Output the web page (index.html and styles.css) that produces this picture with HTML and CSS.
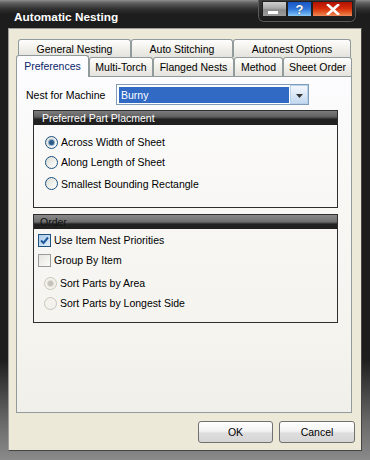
FILE: index.html
```html
<!DOCTYPE html>
<html>
<head>
<meta charset="utf-8">
<link rel="stylesheet" href="styles.css">
</head>
<body>
<div class="window">
  <div class="titlebar">
    <span class="title">Automatic Nesting</span>
    <div class="caption">
      <span class="cb cb-min"><span class="dash"></span></span>
      <span class="cb cb-help">?</span>
      <span class="cb cb-close"><svg width="14" height="11" viewBox="0 0 14 11"><path d="M2 1 L12 10 M12 1 L2 10" stroke="#fff" stroke-width="2.6" stroke-linecap="square"/></svg></span>
    </div>
  </div>
  <div class="client">
    <div class="tabs">
      <div class="tabrow back">
        <div class="tab w-gen">General Nesting</div>
        <div class="tab w-auto">Auto Stitching</div>
        <div class="tab w-opt">Autonest Options</div>
      </div>
      <div class="tabrow front">
        <div class="tab sel w-pref">Preferences</div>
        <div class="tab w-multi">Multi-Torch</div>
        <div class="tab w-flange">Flanged Nests</div>
        <div class="tab w-method">Method</div>
        <div class="tab w-sheet">Sheet Order</div>
      </div>
      <div class="panel">
        <div class="machine-row">
          <span class="label">Nest for Machine</span>
          <div class="combo">
            <span class="combo-sel">Burny</span>
            <span class="combo-btn"><svg width="7" height="4" viewBox="0 0 7 4"><path d="M0 0 H7 L3.5 4 Z" fill="#333"/></svg></span>
          </div>
        </div>
        <div class="group g-place">
          <div class="ghead light">Preferred Part Placment</div>
          <div class="gbody">
            <div class="opt r1"><span class="radio on"></span><span>Across Width of Sheet</span></div>
            <div class="opt r1"><span class="radio"></span><span>Along Length of Sheet</span></div>
            <div class="opt r1 r-last"><span class="radio"></span><span>Smallest Bounding Rectangle</span></div>
          </div>
        </div>
        <div class="group g-order">
          <div class="ghead dark">Order</div>
          <div class="gbody">
            <div class="opt c1"><span class="check on"><svg width="11" height="11" viewBox="0 0 11 11"><path d="M2 5.5 L4.5 8 L9 2.5" fill="none" stroke="#1e5a9c" stroke-width="2"/></svg></span><span>Use Item Nest Priorities</span></div>
            <div class="opt c1"><span class="check"></span><span>Group By Item</span></div>
            <div class="opt r2 r2-first"><span class="radio dis on"></span><span>Sort Parts by Area</span></div>
            <div class="opt r2"><span class="radio dis"></span><span>Sort Parts by Longest Side</span></div>
          </div>
        </div>
      </div>
    </div>
    <div class="buttons">
      <span class="btn w-ok">OK</span>
      <span class="btn w-cancel">Cancel</span>
    </div>
  </div>
</div>
</body>
</html>
```
FILE: styles.css
```css
* { box-sizing: border-box; }
html, body { margin: 0; padding: 0; }
body {
  font-family: "Liberation Sans", Arial, sans-serif;
  font-size: 10.5px;
  color: #000;
  background: #1d1d1d;
}
.window {
  width: 370px;
  height: 460px;
  display: flex;
  flex-direction: column;
  overflow: hidden;
  background: linear-gradient(#1d1d1d 0, #1d1d1d 78%, #6a6a6a 92%, #8a8a8a 100%);
}
.titlebar {
  height: 28px;
  flex: none;
  display: flex;
  align-items: flex-start;
  background: linear-gradient(#8e8e8e 0, #5e5e5e 3px, #303030 9px, #1d1d1d 14px);
}
.title {
  flex: 1;
  margin: 10px 0 0 14px;
  font-size: 11.8px;
  line-height: 14px;
  font-weight: bold;
  color: #fff;
}
.caption {
  display: flex;
  margin-right: 15px;
  padding: 1px 2px 4px 3px;
  background: linear-gradient(#3a3a3a, #1a1a1a);
  border-radius: 0 0 5px 5px;
  box-shadow: 0 0 0 1px #5a5a5a;
}
.cb {
  height: 16px;
  display: flex;
  align-items: center;
  justify-content: center;
  border: 1px solid #202020;
}
.cb-min {
  width: 25px;
  background: linear-gradient(#cfcfcf, #a8a8a8 45%, #8a8a8a 55%, #9c9c9c);
  align-items: flex-end;
  padding-bottom: 2px;
}
.dash { width: 10px; height: 3px; background: #fff; margin-right: 3px; }
.cb-help {
  width: 25px;
  background: linear-gradient(#1a56c4, #2f76db 50%, #5ea6ee 80%, #8ccaf6);
  color: #fff;
  font-weight: bold;
  font-size: 13px;
  text-shadow: 0 0 1px #123;
}
.cb-close {
  width: 41px;
  background: linear-gradient(#b01200, #d42a08 45%, #e25420 70%, #f08a5a);
}
.client {
  flex: none;
  width: 354px;
  height: 423px;
  margin: 0 8px;
  background: #ece9d8;
  border: 1px solid;
  border-color: #9c9c9c #454545 #454545 #9c9c9c;
  padding: 10px 0 0 7px;
  display: flex;
  flex-direction: column;
}
.tabs { width: 336px; display: flex; flex-direction: column; }
.tabrow { display: flex; }
.back { height: 18px; margin-left: 2px; }
.front { height: 19px; align-items: flex-end; }
.tab {
  height: 18px;
  border: 1px solid #919b9c;
  border-bottom: none;
  border-radius: 3px 3px 0 0;
  background: linear-gradient(#fefefe, #f4f3ee 40%, #e3e2dd);
  display: flex;
  align-items: center;
  justify-content: center;
  white-space: nowrap;
}
.front .tab { height: 19px; }
.front .tab.sel {
  height: 22px;
  margin-bottom: -1px;
  position: relative;
  z-index: 1;
  background: #fcfcfe;
  color: #0a246a;
  padding-bottom: 2px;
}
.w-gen { width: 113px; }
.w-auto { width: 102px; }
.w-opt { width: 118px; }
.w-pref { width: 73px; }
.w-multi { width: 64px; }
.w-flange { width: 81px; }
.w-method { width: 49px; }
.w-sheet { width: 69px; }
.panel {
  height: 337px;
  border: 1px solid #919b9c;
  background: linear-gradient(#fcfcfe 0, #f8f7f4 40%, #f4f3ee 80%, #f0efe9);
  padding-top: 7px;
  display: flex;
  flex-direction: column;
}
.machine-row {
  display: flex;
  align-items: center;
  height: 21px;
  padding-left: 9px;
}
.label { width: 90px; }
.combo {
  width: 193px;
  height: 21px;
  border: 1px solid #7f9db9;
  background: #fff;
  display: flex;
}
.combo-sel {
  width: 170px;
  margin: 2px 1px 1px 2px;
  background: #316ac5;
  color: #fff;
  padding-left: 2px;
  line-height: 16px;
}
.combo-btn {
  width: 18px;
  border: 1px solid #b9d1ea;
  background: linear-gradient(#f4f8fd, #dbe8f7 50%, #c4d8ef);
  display: flex;
  align-items: flex-end;
  justify-content: center;
  padding-bottom: 5px;
}
.group {
  width: 305px;
  margin-left: 16px;
  border: 1px solid #2e2e2e;
}
.g-place { margin-top: 5px; height: 98px; }
.g-order { margin-top: 6px; height: 109px; }
.ghead {
  height: 14px;
  line-height: 14px;
  padding-left: 8px;
  background: linear-gradient(#7c7c7c 0, #626262 40%, #3a3a3a 52%, #222 60%, #202020);
}
.ghead.light { color: #fff; }
.ghead.dark {
  color: #111;
  padding-left: 6px;
  background: linear-gradient(#8a8a8a 0, #6e6e6e 50%, #3a3a3a 60%, #222 66%, #202020);
}
.g-place .gbody { padding: 7px 0 0 11px; }
.g-order .gbody { padding: 1px 0 0 4px; }
.opt { display: flex; align-items: center; height: 20px; }
.r-last { height: 21px; margin-top: 1px; }
.r2 { padding-left: 6px; }
.r2-first { margin-top: 3px; }
.radio {
  width: 13px;
  height: 13px;
  border-radius: 50%;
  border: 1px solid #1c5180;
  background: linear-gradient(135deg, #dcdcd5, #f2f2ee 60%, #fff);
  margin-right: 3px;
  display: flex;
  align-items: center;
  justify-content: center;
  flex: none;
}
.radio.on::after {
  content: "";
  width: 5px;
  height: 5px;
  border-radius: 50%;
  background: #2f5a86;
  box-shadow: 0 0 0 1px #8fb0cf;
}
.radio.dis { border-color: #c9c7ba; background: #f3f2ec; margin-right: 3px; }
.radio.dis.on::after { background: #c3c2b8; box-shadow: 0 0 0 1px #dcdbd2; }
.check {
  width: 13px;
  height: 13px;
  border: 1px solid #9a9a9a;
  background: linear-gradient(135deg, #e6e5df, #fbfbf9);
  margin-right: 3px;
  flex: none;
  display: flex;
  align-items: center;
  justify-content: center;
}
.check.on {
  border-color: #1c5180;
  background: linear-gradient(135deg, #a9c8e6, #e2eef9);
}
.buttons {
  display: flex;
  justify-content: flex-end;
  gap: 6px;
  padding-right: 6px;
  margin-top: 8px;
}
.btn {
  height: 22px;
  border: 1px solid #707070;
  border-radius: 3px;
  background: linear-gradient(#ffffff, #f3f3f3 45%, #dedede 55%, #d5d5d5);
  display: flex;
  align-items: center;
  justify-content: center;
}
.w-ok { width: 75px; }
.w-cancel { width: 76px; }
```
